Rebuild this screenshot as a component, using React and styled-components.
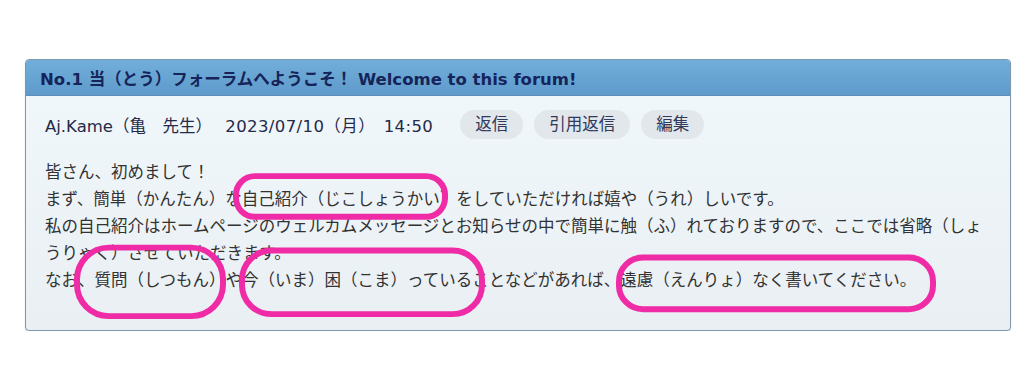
import React from "react";
import styled, { createGlobalStyle } from "styled-components";

const Global = createGlobalStyle`
  html, body { margin: 0; padding: 0; background: #ffffff; }
  body { font-family: "DejaVu Sans", "Noto Sans CJK JP", sans-serif; }
`;

const Page = styled.div`
  padding: 59px 0 0 25px;
`;

const Card = styled.section`
  position: relative;
  width: 984px;
  border: 1px solid #7f97ad;
  border-radius: 4px;
  background: linear-gradient(to bottom, #f1f8fc 0%, #e9eff3 100%);
  box-shadow: 0 1px 1px rgba(60, 80, 100, 0.35);
  overflow: hidden;
`;

const Header = styled.header`
  height: 35px;
  display: flex;
  align-items: center;
  padding: 0 14px;
  background: linear-gradient(to bottom, #71aedb 0%, #5f9bca 100%);
  border-bottom: 1px solid #5d8fba;
`;

const Title = styled.h1`
  margin: 0;
  font-size: 16.5px;
  font-weight: bold;
  color: #16245a;
  white-space: nowrap;
`;

const Meta = styled.div`
  display: flex;
  align-items: center;
  padding: 14px 19px 0;
  color: #242a48;
  font-size: 16.5px;
`;

const Author = styled.span`
  white-space: nowrap;
`;

const Stamp = styled.span`
  white-space: nowrap;
  margin-left: 5px;
  margin-right: 27px;
  letter-spacing: 0.4px;
`;

const Actions = styled.div`
  display: flex;
  gap: 11px;
`;

const Pill = styled.button`
  height: 29px;
  padding: 0 15px;
  border: none;
  border-radius: 15px;
  background: #e2e7ec;
  color: #2f3a5c;
  font-family: inherit;
  font-size: 16.5px;
  line-height: 29px;
  cursor: pointer;
`;

const Body = styled.div`
  padding: 20px 19px 36px;
  color: #323232;
  font-size: 16.5px;
  line-height: 27px;
`;

const Line = styled.p`
  margin: 0;
`;

const Marks = styled.svg`
  position: absolute;
  top: 0;
  left: 0;
  width: 100%;
  height: 100%;
  pointer-events: none;
`;

const marks = [
  { x: 207, y: 114, w: 215, h: 47 },
  { x: 48, y: 186, w: 152, h: 75 },
  { x: 213, y: 189, w: 246, h: 70 },
  { x: 590, y: 196, w: 320, h: 58 },
];

export default function App() {
  return (
    <Page>
      <Global />
      <Card>
        <Header>
          <Title>No.1 当（とう）フォーラムへようこそ！ Welcome to this forum!</Title>
        </Header>
        <Meta>
          <Author>Aj.Kame（亀　先生）　</Author>
          <Stamp>2023/07/10（月）　14:50</Stamp>
          <Actions>
            <Pill>返信</Pill>
            <Pill>引用返信</Pill>
            <Pill>編集</Pill>
          </Actions>
        </Meta>
        <Body>
          <Line>皆さん、初めまして！</Line>
          <Line>まず、簡単（かんたん）な自己紹介（じこしょうかい）をしていただければ嬉や（うれ）しいです。</Line>
          <Line>私の自己紹介はホームページのウェルカムメッセージとお知らせの中で簡単に触（ふ）れておりますので、ここでは省略（しょうりゃく）させていただきます。</Line>
          <Line>なお、質問（しつもん）や今（いま）困（こま）っていることなどがあれば、遠慮（えんりょ）なく書いてください。</Line>
        </Body>
        <Marks viewBox="0 0 984 272" preserveAspectRatio="none">
          {marks.map((m, i) => (
            <rect
              key={i}
              x={m.x + 3}
              y={m.y + 3}
              width={m.w - 6}
              height={m.h - 6}
              rx={(m.h - 6) * 0.46}
              ry={(m.h - 6) * 0.46}
              fill="none"
              stroke="#f02ba6"
              strokeWidth="6"
            />
          ))}
        </Marks>
      </Card>
    </Page>
  );
}
